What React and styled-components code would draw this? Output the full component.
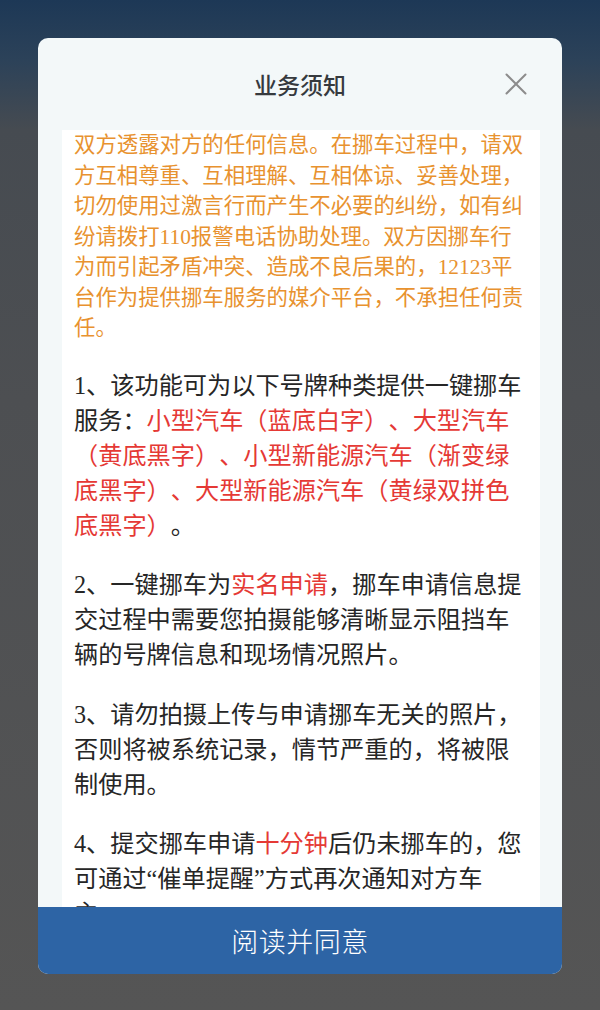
import React from 'react'
import styled, { createGlobalStyle } from 'styled-components'

const GlobalStyle = createGlobalStyle`
html, body {
  margin: 0;
  padding: 0;
}
body {
  background: linear-gradient(180deg, #1d3856 0px, #2c4259 60px, #464b51 130px, #4d4f52 400px, #555555 1010px);
  min-height: 1010px;
  font-family: "Noto Sans CJK SC", sans-serif;
}
`;

const Overlay = styled.div`
min-height: 1010px;
padding-top: 38px;
box-sizing: border-box;
`;

const Modal = styled.div`
width: 524px;
margin: 0 auto;
background: #f3f8f9;
border-radius: 10px;
overflow: hidden;
display: flex;
flex-direction: column;
`;

const Header = styled.div`
height: 92px;
display: grid;
grid-template-columns: 1fr auto 1fr;
align-items: center;
`;

const Title = styled.h2`
grid-column: 2;
margin: 0;
font-family: "Noto Sans CJK SC", sans-serif;
font-size: 23px;
font-weight: 500;
color: #363a3e;
`;

const Close = styled.button`
grid-column: 3;
justify-self: end;
margin-right: 35px;
width: 22px;
height: 22px;
padding: 0;
border: none;
background: none;
display: flex;
cursor: pointer;
`;

const Body = styled.div`
padding: 0 22px 0 24px;
`;

const Panel = styled.div`
background: #ffffff;
height: 777px;
overflow: hidden;
padding: 0 13px 0 12px;
font-family: "Liberation Serif", "Noto Sans CJK SC", serif;
text-spacing-trim: space-all;
font-feature-settings: "halt" 0, "palt" 0;
`;

const Notice = styled.p`
margin: 0 0 24px;
font-size: 21.4px;
line-height: 30.5px;
color: #e8922f;
`;

const Item = styled.p`
margin: 0 0 24.5px;
font-size: 24.2px;
line-height: 35px;
color: #262626;
`;

const Mark = styled.span`
color: #e53935;
`;

const Agree = styled.button`
height: 67px;
border: none;
background: #2d64a5;
color: #ffffff;
font-family: "Noto Sans CJK SC", sans-serif;
font-size: 27px;
font-weight: 300;
letter-spacing: 0.5px;
cursor: pointer;
`;

const CloseIcon = () => (
  <svg width="22" height="22" viewBox="0 0 22 22">
    <path d="M1.5 1.5 L20.5 20.5 M20.5 1.5 L1.5 20.5" stroke="#8c8c8c" strokeWidth="2" strokeLinecap="round" />
  </svg>
);

const App = () => {
  return (
    <>
      <GlobalStyle />
      <Overlay>
        <Modal>
          <Header>
            <Title>业务须知</Title>
            <Close aria-label="关闭"><CloseIcon /></Close>
          </Header>
          <Body>
            <Panel>
              <Notice>
                双方透露对方的任何信息。在挪车过程中，请双方互相尊重、互相理解、互相体谅、妥善处理，切勿使用过激言行而产生不必要的纠纷，如有纠纷请拨打110报警电话协助处理。双方因挪车行为而引起矛盾冲突、造成不良后果的，12123平台作为提供挪车服务的媒介平台，不承担任何责任。
              </Notice>
              <Item>
                1、该功能可为以下号牌种类提供一键挪车服务：<Mark>小型汽车（蓝底白字）、大型汽车（黄底黑字）、小型新能源汽车（渐变绿底黑字）、大型新能源汽车（黄绿双拼色底黑字）</Mark>。
              </Item>
              <Item>
                2、一键挪车为<Mark>实名申请</Mark>，挪车申请信息提交过程中需要您拍摄能够清晰显示阻挡车辆的号牌信息和现场情况照片。
              </Item>
              <Item>
                3、请勿拍摄上传与申请挪车无关的照片，否则将被系统记录，情节严重的，将被限制使用。
              </Item>
              <Item>
                4、提交挪车申请<Mark>十分钟</Mark>后仍未挪车的，您可通过“催单提醒”方式再次通知对方车主。
              </Item>
            </Panel>
          </Body>
          <Agree>阅读并同意</Agree>
        </Modal>
      </Overlay>
    </>
  )
}

export default App
